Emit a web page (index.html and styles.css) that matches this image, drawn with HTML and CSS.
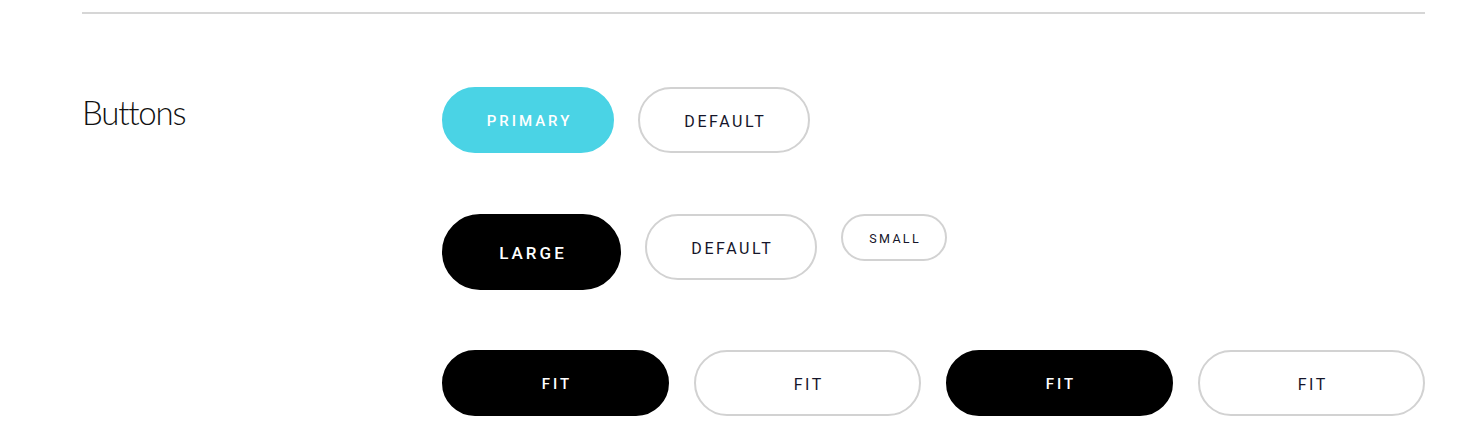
FILE: index.html
```html
<!DOCTYPE html>
<html lang="en">
<head>
<meta charset="utf-8">
<title>Buttons</title>
<link rel="stylesheet" href="styles.css">
</head>
<body>
<div class="page">
  <hr class="rule">
  <section class="section">
    <h2 class="section-title">Buttons</h2>
    <div class="section-body">
      <div class="btn-row btn-row-first">
        <button class="btn btn-primary">Primary</button>
        <button class="btn btn-default">Default</button>
      </div>
      <div class="btn-row">
        <button class="btn btn-dark btn-large">Large</button>
        <button class="btn btn-default">Default</button>
        <button class="btn btn-default btn-small">Small</button>
      </div>
      <div class="btn-grid">
        <button class="btn btn-dark btn-fit">Fit</button>
        <button class="btn btn-default btn-fit">Fit</button>
        <button class="btn btn-dark btn-fit">Fit</button>
        <button class="btn btn-default btn-fit">Fit</button>
      </div>
    </div>
  </section>
</div>
</body>
</html>
```

FILE: styles.css
```css
html, body {
  margin: 0;
  padding: 0;
  background: #fff;
}
.page {
  padding: 12px 34px 0 82px;
}
.rule {
  margin: 0;
  border: 0;
  border-top: 2px solid #d6d6d6;
}
.section {
  display: grid;
  grid-template-columns: 360px 1fr;
  padding-top: 73px;
}
.section-title {
  margin: 0;
  font-family: "Lato", sans-serif;
  font-weight: 300;
  font-size: 33px;
  line-height: 1;
  color: #111;
  padding-top: 9px;
  letter-spacing: -1.2px;
}
.section-body {
  display: flex;
  flex-direction: column;
  gap: 60px;
}
.btn-row {
  display: flex;
  align-items: flex-start;
  gap: 24px;
}
.btn-row-first {
  margin-bottom: 1px;
}
.btn-grid {
  display: grid;
  grid-template-columns: repeat(4, 1fr);
  gap: 25px;
}
.btn {
  font-family: "Roboto", sans-serif;
  font-weight: 500;
  font-size: 15px;
  letter-spacing: 3px;
  text-transform: uppercase;
  height: 66px;
  width: 172px;
  border-radius: 33px;
  border: 2px solid transparent;
  padding: 2px 0 0 3px;
  cursor: pointer;
  display: flex;
  align-items: center;
  justify-content: center;
  box-sizing: border-box;
}
.btn-primary {
  background: #4ad3e5;
  color: #fff;
  border-color: #4ad3e5;
}
.btn-default {
  background: #fff;
  color: #15152a;
  border-color: #d2d2d2;
  font-weight: 400;
  font-size: 16px;
  letter-spacing: 2.6px;
  padding-left: 2.6px;
}
.btn-dark {
  background: #000;
  color: #fff;
  border-color: #000;
}
.btn-large {
  width: 179px;
  height: 76px;
  border-radius: 38px;
  font-size: 17px;
}
.btn-small {
  width: 106px;
  height: 47px;
  border-radius: 24px;
  font-size: 12.5px;
  letter-spacing: 2.3px;
  padding-left: 2.3px;
}
.btn-fit {
  width: auto;
}
```
